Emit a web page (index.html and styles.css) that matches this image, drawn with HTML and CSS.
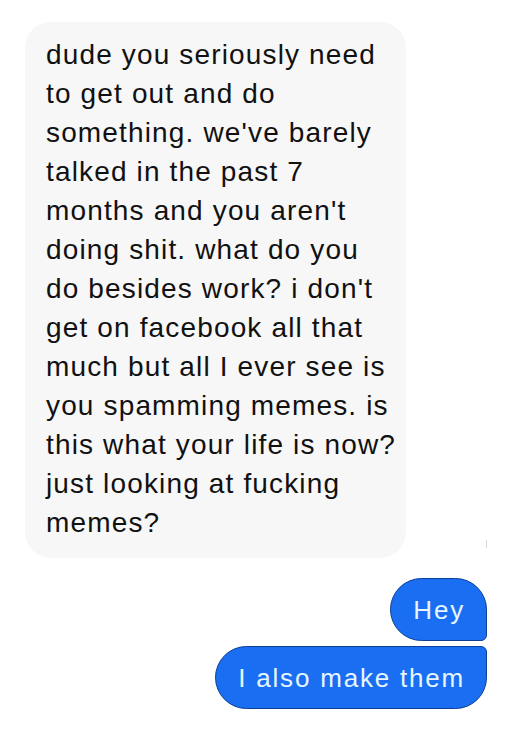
FILE: index.html
```html
<!DOCTYPE html>
<html>
<head>
<meta charset="utf-8">
<link rel="stylesheet" href="styles.css">
</head>
<body>
<div class="chat">
  <div class="row in">
    <div class="bubble gray">dude you seriously need<br>to get out and do<br>something. we've barely<br>talked in the past 7<br>months and you aren't<br>doing shit. what do you<br>do besides work? i don't<br>get on facebook all that<br>much but all I ever see is<br>you spamming memes. is<br>this what your life is now?<br>just looking at fucking<br>memes?</div>
    <span class="mark"></span>
  </div>
  <div class="row out first">
    <div class="bubble blue">Hey</div>
  </div>
  <div class="row out">
    <div class="bubble blue">I also make them</div>
  </div>
</div>
</body>
</html>
```
FILE: styles.css
```css
html, body {
  margin: 0;
  padding: 0;
  background: #ffffff;
}
body {
  width: 506px;
  height: 738px;
  overflow: hidden;
  font-family: "Liberation Sans", Arial, sans-serif;
}
.chat {
  display: flex;
  flex-direction: column;
  padding: 22px 19px 0 25px;
}
.row {
  display: flex;
}
.row.in {
  align-items: flex-end;
}
.mark {
  width: 1px;
  height: 8px;
  background: #d8d8d8;
  margin: 0 0 10px 80px;
}
.row.out {
  justify-content: flex-end;
}
.row.first {
  margin-top: 20px;
}
.row.out + .row.out {
  margin-top: 5px;
}
.bubble.gray {
  width: 388px;
  box-sizing: border-box;
  background: #f7f7f7;
  color: #111;
  border-radius: 26px;
  padding: 13px 0 16px 21px;
  font-size: 28px;
  line-height: 39px;
  letter-spacing: 1.15px;
  white-space: nowrap;
}
.bubble.blue {
  background: #1a6ef2;
  color: #e6f6ff;
  border: 1.5px solid #0d3f9a;
  font-size: 26px;
  line-height: 30px;
  letter-spacing: 1.8px;
  padding: 16px 21px 15px 22px;
  border-radius: 32px;
}
.row.first .bubble.blue {
  border-bottom-right-radius: 6px;
}
.row.out + .row.out .bubble.blue {
  border-top-right-radius: 6px;
}
```
